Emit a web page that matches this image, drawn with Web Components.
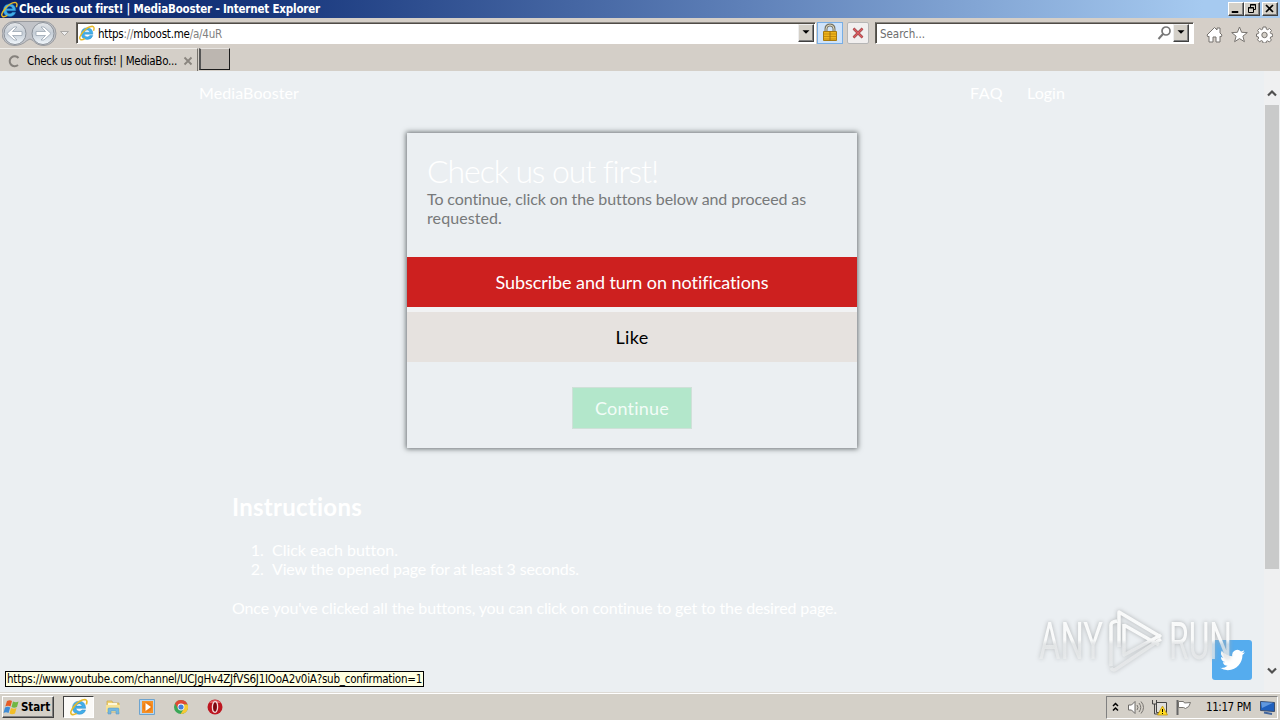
<!DOCTYPE html>
<html lang="en">
<head>
<meta charset="utf-8">
<title>Check us out first! | MediaBooster</title>
<style>
  body { margin: 0; width: 1280px; height: 720px; overflow: hidden; }
</style>
</head>
<body>
<win-desktop>
  <title-bar slot="browser"><fit-text w="301">Check us out first! | MediaBooster - Internet Explorer</fit-text></title-bar>
  <address-bar slot="browser"></address-bar>
  <tab-strip slot="browser"><fit-text w="150">Check us out first! | MediaBo...</fit-text></tab-strip>
  <web-page slot="page">
    <site-nav></site-nav>
    <check-card>
      <span slot="title"><fit-text w="231">Check us out first!</fit-text></span>
      <span slot="text"><fit-text w="379">To continue, click on the buttons below and proceed as</fit-text><br><fit-text w="75">requested.</fit-text></span>
      <action-row kind="subscribe"><fit-text w="273">Subscribe and turn on notifications</fit-text></action-row>
      <action-row kind="like"><fit-text w="33">Like</fit-text></action-row>
    </check-card>
    <how-to></how-to>
  </web-page>
  <scroll-bar slot="page"></scroll-bar>
  <status-tip slot="over"><fit-text w="415">https://www.youtube.com/channel/UCJgHv4ZJfVS6J1IOoA2v0iA?sub_confirmation=1</fit-text></status-tip>
  <twitter-badge slot="over"></twitter-badge>
  <any-run slot="over"></any-run>
  <task-bar slot="bar"></task-bar>
</win-desktop>

<template id="desktop">
  <style>
    :host { display: flex; flex-direction: column; position: relative; width: 1280px; height: 720px; overflow: hidden;
      background: #d4d0c8; color: #000; font: 11.5px/14px "DejaVu Sans Condensed", "DejaVu Sans", sans-serif; }
    main { display: flex; height: 621px; background: #ebeff2; }
  </style>
  <slot name="browser"></slot>
  <main><slot name="page"></slot></main>
  <slot name="over"></slot>
  <slot name="bar"></slot>
</template>

<template id="titlebar">
  <style>
    :host { display: flex; align-items: center; height: 18px; padding: 0 2px 0 1px; box-sizing: border-box;
      background: linear-gradient(90deg, #0a246a 0, #16357b 20%, #5e80b8 58%, #a6caf0 94%); color: #fff; font-weight: bold; }
    .name { flex: 1; display: flex; align-items: center; gap: 1px; }
    .btn { width: 16px; height: 14px; box-sizing: border-box; background: #d4d0c8; border: 1px solid; border-color: #fff #404040 #404040 #fff; box-shadow: inset -1px -1px #808080; }
    .btn:last-child { margin-left: 2px; }
    svg { display: block; }
  </style>
  <div class="name"><ui-icon name="ie" size="17"></ui-icon><slot></slot></div>
  <div class="btn"><svg width="14" height="12"><path d="M3 8.5h6v1H3z" stroke="#000"/></svg></div>
  <div class="btn"><svg width="14" height="12" fill="none" stroke="#000"><path d="M5.500 4V1.500h5v5H9M5 2h6M3.500 4.500h5v5h-5zM3 5h6" /></svg></div>
  <div class="btn"><svg width="14" height="12"><path d="M3 2l7 7M10 2L3 9" stroke="#000" stroke-width="1.700"/></svg></div>
</template>

<template id="address">
  <style>
    :host { display: flex; align-items: flex-start; height: 30px; padding: 4px 7px 0 3px; box-sizing: border-box; background: #d5cfc8; }
    .nav { display: block; width: 73px; height: 25px; margin: -1px 1px 0 -1px; }
    .field { display: flex; align-items: center; height: 22px; box-sizing: border-box; background: #fff;
      border: 1px solid; border-color: #888580 #fff #fff #605e58; box-shadow: inset 1px 1px #504c46; }
    .field fit-text { padding-top: 2px; }
    .url { width: 740px; padding-left: 2px; gap: 3px; }
    .search { width: 319px; margin-left: 6px; padding: 0 4px 0 4px; color: #6d6d6d; }
    .grow { flex: 1; }
    .drop { width: 16px; height: 18px; box-sizing: border-box; background: #d4d0c8; border: 1px solid; border-color: #eee #404040 #404040 #eee; box-shadow: inset -1px -1px #808080; }
    .url .drop { margin-right: 1px; }
    .sq { width: 26px; height: 22px; margin-left: 1px; box-sizing: border-box; border: 1px solid #78aee5; background: #cfe3fa; }
    .stop { width: 22px; margin-left: 4px; border-color: #b6b6b6; background: #f1efef; border-radius: 2px; }
    .tools { display: flex; gap: 8px; margin: 4px 0 0 12px; }
    i { font-style: normal; color: #808080; }
  </style>
  <svg class="nav" viewBox="0 0 73 25">
    <defs><linearGradient id="g" x1="0" y1="0" x2="0" y2="1"><stop stop-color="#e5e7ea"/><stop offset=".48" stop-color="#c5cdd6"/><stop offset="1" stop-color="#f2f8fd"/></linearGradient></defs>
    <path d="M12 .5h30a12 12 0 0 1 0 24q-7 0-11-5q-3-3-6 0q-5 5-13 5A12 12 0 0 1 12 .5z" fill="#c1c3c8" stroke="#9a9ca0"/>
    <g fill="url(#g)" stroke="#8c929a"><circle cx="13" cy="12.500" r="11"/><circle cx="41" cy="12.500" r="11"/></g>
    <g fill="#fff" stroke="#9ba6b2" stroke-width=".8"><path d="M5 12.500l7-6.500h3l-4.500 4.500H20v4h-9.500L15 19h-3z"/><path d="M49 12.500L42 6h-3l4.500 4.500H34v4h9.500L39 19h3z"/></g>
    <path d="M58.500 10.500h8l-4 4z" fill="#eee" stroke="#aaa8a6"/>
  </svg>
  <div class="field url"><ui-icon name="ie" size="16"></ui-icon><fit-text w="124">https<i>://</i>mboost.me<i>/a/4uR</i></fit-text><span class="grow"></span><div class="drop"><ui-icon name="down" size="14"></ui-icon></div></div>
  <div class="sq"><ui-icon name="lock" size="24" h="20"></ui-icon></div>
  <div class="sq stop"><ui-icon name="stop" size="20"></ui-icon></div>
  <div class="field search"><fit-text w="45">Search...</fit-text><span class="grow"></span><ui-icon name="find" size="16"></ui-icon><div class="drop"><ui-icon name="down" size="14"></ui-icon></div></div>
  <div class="tools"><ui-icon name="home" size="17"></ui-icon><ui-icon name="star" size="17"></ui-icon><ui-icon name="gear" size="17"></ui-icon></div>
</template>

<template id="tabs">
  <style>
    :host { display: flex; height: 23px; background: #d4cfc8; }
    .tab { display: flex; align-items: center; width: 198px; box-sizing: border-box; padding: 2px 4px 0 6px; border-top: 1px solid #eeece8; border-right: 1px solid #77746e; }
    .tab ui-icon:first-child { margin-right: 5px; }
    .tab ui-icon:last-child { margin-left: auto; }
    .new { width: 31px; height: 22px; margin-left: 1px; box-sizing: border-box; background: #bcb6b0; border: 1px solid; border-color: #e6e3df #1b1b1b #1b1b1b #555; border-left-width: 2px; }
  </style>
  <div class="tab"><ui-icon name="spin" size="16"></ui-icon><slot></slot><ui-icon name="x" size="10"></ui-icon></div>
  <div class="new"></div>
</template>

<template id="page">
  <style>
    :host { display: flex; flex-direction: column; align-items: flex-start; width: 1264px; color: #fff; font: 16px/19px Lato, sans-serif; }
    ::slotted(check-card) { align-self: center; margin-top: 31px; }
  </style>
  <slot></slot>
</template>

<template id="nav">
  <style>
    :host { display: flex; gap: 24px; align-self: stretch; padding: 12px 199px 0; }
    .brand { flex: 1; }
  </style>
  <span class="brand"><fit-text w="100">MediaBooster</fit-text></span>
  <fit-text w="33">FAQ</fit-text>
  <fit-text w="38">Login</fit-text>
</template>

<template id="card">
  <style>
    :host { display: flex; flex-direction: column; width: 450px; height: 315px; box-shadow: 0 0 5px 1px #6a7073; background: #ebeff2; }
    header { height: 124px; padding: 19px 20px 0; box-sizing: border-box; }
    .title { display: block; height: 37px; font-size: 32px; line-height: 38px; font-weight: 300; }
    .text { color: #77797a; }
    .rows { display: flex; flex-direction: column; gap: 5px; background: linear-gradient(#f1f2f3, #f1f2f3) no-repeat 0 50px / 100% 5px; }
    button { align-self: center; width: 120px; height: 42px; margin-top: 25px; padding: 0; border: 1px solid #cfe0d8; background: #b3e7cb; color: #f2fcf7; font: 18px/22px Lato, sans-serif; }
  </style>
  <header>
    <div class="title"><slot name="title"></slot></div>
    <div class="text"><slot name="text"></slot></div>
  </header>
  <div class="rows"><slot></slot></div>
  <button><fit-text w="74">Continue</fit-text></button>
</template>

<template id="row">
  <style>
    :host { display: flex; align-items: center; justify-content: center; height: 50px; padding-top: 1px; box-sizing: border-box; font-size: 18px; }
    :host([kind=subscribe]) { background: #cd201f; }
    :host([kind=like]) { background: #e6e2df; color: #000; }
  </style>
  <slot></slot>
</template>

<template id="howto">
  <style>
    :host { display: block; padding: 44px 0 0 232px; }
    h2 { margin: 0; font-size: 24px; line-height: 29px; }
    ol { margin: 19px 0 20px; padding: 0 0 0 36px; }
    li { padding-left: 4px; }
    p { margin: 0; }
  </style>
  <h2><fit-text w="130">Instructions</fit-text></h2>
  <ol>
    <li><fit-text w="126">Click each button.</fit-text></li>
    <li><fit-text w="307">View the opened page for at least 3 seconds.</fit-text></li>
  </ol>
  <p><fit-text w="605">Once you've clicked all the buttons, you can click on continue to get to the desired page.</fit-text></p>
</template>

<template id="scroll">
  <style>
    :host { display: flex; flex-direction: column; align-items: center; width: 16px; padding-top: 14px; box-sizing: border-box; background: #eff0f1; }
    .thumb { width: 14px; height: 464px; margin: 4px 0 94px; background: #c9caca; }
  </style>
  <ui-icon name="up" size="16"></ui-icon>
  <div class="thumb"></div>
  <ui-icon name="dn" size="16"></ui-icon>
</template>

<template id="tip">
  <style>
    :host { position: absolute; left: 5px; top: 671px; width: 419px; height: 16px; box-sizing: border-box; padding-left: 1px; border: 1px solid #000; background: #ffffe1; }
  </style>
  <slot></slot>
</template>

<template id="twitter">
  <style>
    :host { position: absolute; left: 1212px; top: 640px; width: 40px; height: 40px; border-radius: 3px; background: #55acee; }
    svg { display: block; margin: 0 auto; padding-top: 7px; }
  </style>
  <svg width="25" height="26" viewBox="0 0 24 24"><path fill="#fff" d="M23.950 4.570a10 10 0 0 1-2.820.770 4.960 4.960 0 0 0 2.160-2.720 9.900 9.900 0 0 1-3.120 1.190 4.920 4.920 0 0 0-8.380 4.480A13.930 13.930 0 0 1 1.640 3.160a4.920 4.920 0 0 0 1.520 6.570 4.900 4.900 0 0 1-2.230-.61v.06a4.920 4.920 0 0 0 3.950 4.820 5 5 0 0 1-2.210.09 4.940 4.940 0 0 0 4.600 3.420A9.870 9.870 0 0 1 0 19.540a13.990 13.990 0 0 0 7.550 2.210c9.050 0 14-7.500 14-13.980 0-.21 0-.42-.02-.63a9.940 9.940 0 0 0 2.420-2.570z"/></svg>
</template>

<template id="watermark">
  <style>
    :host { position: absolute; left: 1034px; top: 602px; width: 216px; height: 78px; filter: drop-shadow(0 0 2px #a9acae); }
    svg { display: block; overflow: visible; }
    text { font: 52px Roboto, sans-serif; fill: url(#fade); }
  </style>
  <svg width="216" height="78" viewBox="0 -2 216 78">
    <defs><linearGradient id="fade" gradientUnits="userSpaceOnUse" x1="0" y1="0" x2="0" y2="72"><stop offset=".5" stop-color="#fbfcfc" stop-opacity=".95"/><stop offset=".56" stop-color="#eceeef" stop-opacity=".7"/></linearGradient></defs>
    <text x="5" y="55" textLength="64" lengthAdjust="spacingAndGlyphs">ANY</text>
    <text x="135" y="55" textLength="63" lengthAdjust="spacingAndGlyphs">RUN</text>
    <g fill="none" stroke="url(#fade)" stroke-width="3.500" stroke-linejoin="round">
      <path d="M77 62V21q0-3 6-4M85 43V8l42 25M90 20v31l37-20M127 35L82 65q-3 2-5-1M90 21l35 20"/>
    </g>
  </svg>
</template>

<template id="taskbar">
  <style>
    :host { display: flex; align-items: center; height: 28px; padding: 2px 2px 0; box-sizing: border-box; background: #d4d0c8; box-shadow: inset 0 1px #dddad5, inset 0 2px #fff; }
    .start { display: flex; align-items: center; gap: 1px; width: 52px; height: 22px; box-sizing: border-box; border: 1px solid; border-color: #fff #404040 #404040 #fff; box-shadow: inset -1px -1px #808080; font-weight: bold; }
    .active { width: 31px; height: 22px; margin: 0 10px 0 9px; box-sizing: border-box; border: 1px solid; border-color: #404040 #fff #fff #404040; background: #fbfaf8; display: flex; justify-content: center; align-items: center; }
    .apps { flex: 1; display: flex; gap: 16px; }
    .tray { display: flex; align-items: center; width: 172px; height: 23px; box-sizing: border-box; padding: 0 1px 0 4px; border: 1px solid; border-color: #808080 #fff #fff #808080; }
    .tray ui-icon + ui-icon { margin-left: 7px; }
    .tray fit-text { margin: 0 8px 0 auto; }
  </style>
  <div class="start"><ui-icon name="flag" size="17"></ui-icon><fit-text w="29">Start</fit-text></div>
  <div class="active"><ui-icon name="ie" size="18"></ui-icon></div>
  <div class="apps"><ui-icon name="folder" size="18"></ui-icon><ui-icon name="play" size="18"></ui-icon><ui-icon name="chrome" size="18"></ui-icon><ui-icon name="opera" size="18"></ui-icon></div>
  <div class="tray"><ui-icon name="more" size="9" h="16"></ui-icon><ui-icon name="sound" size="17"></ui-icon><ui-icon name="net" size="17"></ui-icon><ui-icon name="pennant" size="17"></ui-icon><fit-text w="45">11:17 PM</fit-text><ui-icon name="screen" size="17"></ui-icon></div>
</template>

<script>
  // every icon is drawn in its own viewBox: [width, height, markup]
  const icons = {
    ie: [16, 16, '<path d="M13.900 9.200H5.300q.2 2.700 3 2.700 1.700 0 2.400-1.300h3.100q-1.200 3.900-5.600 3.900Q2.300 14.300 2.200 8.500 2.500 2.900 8.200 2.800q5.600.2 5.700 6.400zM5.400 7.200h5.400Q10.500 5.100 8.200 5 5.800 5.100 5.400 7.200z" fill="#42aee8" stroke="#1d80c4" stroke-width=".4"/><path d="M14.500 5.800Q16 1.800 13.300 1.300 8.700 1.500 4 7-1 13 1.600 14.600q1.500.7 4.300-1" fill="none" stroke="#e7b928" stroke-width="1.400"/>'],
    down: [14, 16, '<path d="M3 6h8L7 10z"/>'],
    lock: [24, 20, '<path d="M8 10V6q0-4 4-4t4 4v4" fill="none" stroke="#777466" stroke-width="3"/><path d="M8 10V6q0-4 4-4t4 4v4" fill="none" stroke="#d9d5bd" stroke-width="1"/><path d="M5.500 8.500h13v9h-13z" fill="#efb51c" stroke="#a77a10"/><path d="M6 11h12M6 13.500h12M6 16h12" stroke="#c78d0c"/><path d="M12 8v10" stroke="#9c7112"/>'],
    stop: [20, 20, '<path d="M5.500 5.500l9 9M14.500 5.500l-9 9" stroke="#8c4242" stroke-width="2.500"/><path d="M5.500 5.500l9 9M14.500 5.500l-9 9" stroke="#dc5c62" stroke-width="1.500"/>'],
    find: [16, 16, '<circle cx="9" cy="6" r="4" fill="none" stroke="#777" stroke-width="1.700"/><path d="M6 9l-4.500 5" stroke="#777" stroke-width="2"/>'],
    home: [17, 17, '<path d="M1 9l7.500-7.500L11 4V2h3v5l2 2-1 2-1-.8V16h-4v-5H7v5H3v-5.800L2 11z" fill="#fff" stroke="#77736f"/>'],
    star: [17, 17, '<path d="M8.500 1l2.100 5.300 5.700.3-4.400 3.600 1.500 5.500-4.900-3.100-4.900 3.100 1.500-5.500L.7 6.600l5.700-.3z" fill="#fff" stroke="#77736f"/>'],
    gear: [17, 17, '<path d="M7 1h3l.4 2.200 1.300.5L13.500 2.500l2 2-1.200 1.800.5 1.300 1.900.4v2.500l-2 .4-.5 1.300 1.200 1.800-2 2-1.800-1.200-1.200.5L10 17H7l-.4-1.900-1.300-.5L3.500 15.800l-2-2L2.700 12l-.5-1.200L.5 10.500V8l1.800-.4.500-1.300-1.200-1.800 2-2 1.800 1.200 1.200-.5z" fill="#fff" stroke="#77736f"/><circle cx="8.500" cy="9" r="2.700" fill="#d4d0c8" stroke="#77736f"/>'],
    spin: [16, 16, '<path d="M12.500 5A5 5 0 1 0 12 12" fill="none" stroke="#85817c" stroke-width="2"/>'],
    x: [10, 10, '<path d="M1.500 1.500l7 7M8.500 1.500l-7 7" stroke="#8a857f" stroke-width="1.800"/>'],
    up: [16, 16, '<path d="M4 10.500L8 6.500l4 4" fill="none" stroke="#505050" stroke-width="2.200"/>'],
    dn: [16, 16, '<path d="M4 5.500L8 9.500l4-4" fill="none" stroke="#505050" stroke-width="2.200"/>'],
    flag: [17, 17, '<path d="M4 2q3-1.500 5 0L7.500 7.500Q5 6 2.300 7.500z" fill="#e65c25"/><path d="M10 2.500q3 1.500 5.500 0L14 8q-3 1.500-5.500 0z" fill="#70b743"/><path d="M2 8.500q3-1.500 5.200 0L5.500 14q-2.500-1.500-5 0z" fill="#3e8bd5"/><path d="M8 9q3 1.500 5.500 0L12 14.500q-3 1.500-5.500 0z" fill="#f2be27"/>'],
    folder: [18, 18, '<path d="M3 3h5l1 2h6v9H3z" fill="#f3d36e" stroke="#c7a64e" stroke-width=".7"/><path d="M4 5h9v3H4z" fill="#fff8d8"/><path d="M2 7h14v7H2z" fill="#f7e295"/><path d="M4 16v-5q0-1 1-1h9q1 0 1 1v5h-3v-3H7v3z" fill="#74b7df" stroke="#5597bd" stroke-width=".5"/>'],
    play: [18, 18, '<path d="M1.500 1.500h15v15h-15z" fill="#b9d6ee" stroke="#6ea4cf"/><path d="M4 3h11v12H4z" fill="#f59127"/><circle cx="9.500" cy="9" r="4.700" fill="#ef7e14"/><path d="M7.500 5l5.500 4-5.500 4z" fill="#fff"/>'],
    chrome: [18, 18, '<circle cx="9" cy="9" r="7" fill="#3aa757"/><path d="M3 5.400A7 7 0 0 1 15.600 6.500H9L6 10.500z" fill="#df4935"/><path d="M15.600 6.500A7 7 0 0 1 8.600 16L12 10.500 11 6.500z" fill="#f8c934"/><circle cx="9" cy="9" r="3.400" fill="#fff"/><circle cx="9" cy="9" r="2.600" fill="#437fdc"/>'],
    opera: [18, 18, '<circle cx="9" cy="9" r="7.500" fill="#bd1620"/><path d="M3 5a7.500 7.500 0 0 1 12 0z" fill="#e25b60"/><ellipse cx="9" cy="9" rx="2.600" ry="5.300" fill="#7d0710" stroke="#f3dede" stroke-width="1.300"/>'],
    more: [9, 16, '<path d="M2 7l2.500-2.500L7 7M2 11.500L4.500 9 7 11.500" fill="none" stroke="#000" stroke-width="1.500"/>'],
    sound: [17, 17, '<path d="M1.500 6h3L8 2.500v12L4.500 11h-3z" fill="#fff" stroke="#6c6a67"/><path d="M10 6q2 2.500 0 5M12 4q3.500 4.500 0 9M14 2.500q5 6 0 12" fill="none" stroke="#77746f"/>'],
    net: [17, 17, '<path d="M5.500 3.500h10v10h-10z" fill="#dfdfdc" stroke="#444"/><path d="M1.500 1v4h4V1M3.500 5v10h4" fill="none" stroke="#444"/><path d="M11.500 7l5 9h-10z" fill="#ffdb22" stroke="#bb8c00" stroke-width=".7"/><path d="M11.500 10v3M11.500 14v1" stroke="#000"/>'],
    pennant: [17, 17, '<path d="M2.500 1v15" stroke="#666" stroke-width="2"/><path d="M3.500 2.500h5l1 1.500 6-.5q-1 5-5 6l-2-1h-5z" fill="#fff" stroke="#77746f"/>'],
    screen: [17, 17, '<path d="M1.500 2.500l14 1v9l-14-1z" fill="#2060bd" stroke="#3a4d6d"/><path d="M2 3l12 .7L3 9z" fill="#6198de"/><path d="M5 13.500l8 1.500" stroke="#42669e" stroke-width="2"/>']
  };

  class UiIcon extends HTMLElement {
    connectedCallback() {
      const [vw, vh, art] = icons[this.getAttribute('name')];
      const w = this.getAttribute('size');
      const h = this.getAttribute('h') || w;
      this.attachShadow({ mode: 'open' });
      this.shadowRoot.innerHTML = `<style>:host { display: block; flex: none; width: ${w}px; height: ${h}px } svg { display: block }</style>
        <svg width="${w}" height="${h}" viewBox="0 0 ${vw} ${vh}">${art}</svg>`;
    }
  }

  // one line of text, tracked so that it takes up w pixels
  class FitText extends HTMLElement {
    connectedCallback() {
      this.attachShadow({ mode: 'open' });
      this.shadowRoot.innerHTML = '<style>:host { display: inline-block; white-space: nowrap; font-variant-ligatures: none }</style><span><slot></slot></span>';
      requestAnimationFrame(() => this.fit());
    }
    fit() {
      const w = Number(this.getAttribute('w'));
      const line = this.shadowRoot.querySelector('span');
      line.style.letterSpacing = (w - line.getBoundingClientRect().width) / this.textContent.length + 'px';
    }
  }

  function define(tag, id) {
    customElements.define(tag, class extends HTMLElement {
      connectedCallback() {
        this.attachShadow({ mode: 'open' });
        this.shadowRoot.append(document.querySelector('#' + id).content.cloneNode(true));
      }
    });
  }

  define('win-desktop', 'desktop');
  define('title-bar', 'titlebar');
  define('address-bar', 'address');
  define('tab-strip', 'tabs');
  define('web-page', 'page');
  define('site-nav', 'nav');
  define('check-card', 'card');
  define('action-row', 'row');
  define('how-to', 'howto');
  define('scroll-bar', 'scroll');
  define('status-tip', 'tip');
  define('twitter-badge', 'twitter');
  define('any-run', 'watermark');
  define('task-bar', 'taskbar');
  customElements.define('ui-icon', UiIcon);
  customElements.define('fit-text', FitText);
</script>
</body>
</html>
